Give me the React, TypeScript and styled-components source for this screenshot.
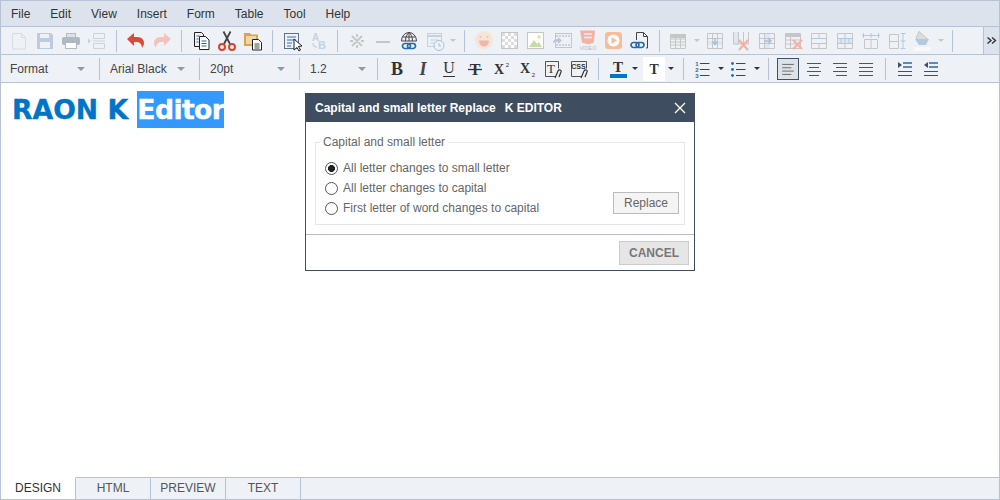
import React, { ReactElement, ReactNode } from "react";
import styled, { createGlobalStyle } from "styled-components";

const LINE = "#b7c3d5";
const BAR = "#eef1f5";
const OFF = "#c6c6c6";
const PALE = "#c3d2e3";
const DARK = "#333";
const BLUE = "#2a6aa8";
const TINT = "#dde8f2";

const GlobalStyle = createGlobalStyle`
  html, body {
    margin: 0;
    padding: 0;
    background: #fff;
    font-family: "Liberation Sans", Arial, sans-serif;
  }
`;

const Ico = ({ children }: { children: ReactNode }): ReactElement => (
  <svg width={24} height={24} viewBox="0 0 24 24" fill="none">
    {children}
  </svg>
);

const chain = (x: number, y: number, c: string): ReactElement => (
  <g transform={`translate(${x} ${y})`} stroke={c} strokeWidth={1.7} fill="none">
    <rect x={0} y={0} width={8} height={5} rx={2.5} />
    <rect x={5} y={0} width={8} height={5} rx={2.5} />
  </g>
);

const ICONS: Record<string, ReactElement> = {
  new: (
    <Ico>
      <path d="M5.5 4.5h9l4 4v11.5h-13zM14.5 4.5v4h4" stroke="#d6dce4" />
    </Ico>
  ),
  save: (
    <Ico>
      <path d="M4 4h14l2 2v14H4z" fill="#bccbdd" />
      <rect x={7} y={5} width={9} height={4} fill={BAR} />
      <rect x={7} y={13} width={10} height={6} fill={BAR} />
    </Ico>
  ),
  print: (
    <Ico>
      <rect x={7.500} y={4.500} width={9} height={4} fill="#dde1e6" stroke="#b4bcc5" />
      <rect x={3} y={8} width={18} height={8} rx={2} fill="#b0b8c1" />
      <rect x={6.500} y={13.500} width={11} height={6} fill="#fff" stroke="#b0b8c1" />
    </Ico>
  ),
  pagebreak: (
    <Ico>
      <path d="M8.500 4.500h11v5h-11zM8.500 14.500h11v5h-11zM8 12h12" stroke="#ccd2da" />
      <path d="M3 9.500l3 2.500-3 2.500z" fill={PALE} />
    </Ico>
  ),
  undo: (
    <Ico>
      <path d="M3 10l7-6v4h3c5 0 7 3 7 6 0 2-1 3.500-2 5 0-3-2-6-5-6h-3v4z" fill="#dc4a35" />
    </Ico>
  ),
  redo: (
    <Ico>
      <path d="M21 10l-7-6v4h-3c-5 0-7 3-7 6 0 2 1 3.500 2 5 0-3 2-6 5-6h3v4z" fill="#f2c3bb" />
    </Ico>
  ),
  copy: (
    <Ico>
      <path d="M5.500 3.500h7l2 2v12h-9z" fill={BAR} stroke="#222" />
      <path d="M10.500 7.500h6l3.500 3.500v9.500h-9.500z" fill="#fff" stroke="#222" />
      <path d="M12.500 12h5M12.500 14.500h5M12.500 17h5M7.500 7h3M7.500 10h2M7.500 13h2" stroke="#2a6aa8" />
    </Ico>
  ),
  cut: (
    <Ico>
      <path d="M9 15L15.500 2.500M15 15L8.500 2.500" stroke="#444" strokeWidth={1.800} />
      <circle cx={7} cy={18} r={3} stroke="#d9432f" strokeWidth={2} />
      <circle cx={17} cy={18} r={3} stroke="#d9432f" strokeWidth={2} />
    </Ico>
  ),
  paste: (
    <Ico>
      <path d="M3 4h6l1 1.500h7V17H3z" fill="#d9a44c" />
      <rect x={5} y={7} width={10} height={8} fill="#efd6a8" />
      <path d="M11.500 10.500h6l3 3v7.500h-9z" fill="#fff" stroke="#222" />
      <path d="M13.500 15h5M13.500 17h5M13.500 19h5" stroke="#444" />
    </Ico>
  ),
  selectall: (
    <Ico>
      <rect x={4.500} y={4.500} width={14} height={15} fill={BAR} stroke="#5f7188" />
      <path d="M7 8h9M7 11h9M7 14h5M7 17h4" stroke="#6f9bd1" strokeWidth={1.300} />
      <path d="M14 10v11l3-2.500 2 3.500 1.500-1-2-3.500 3.500-.5z" fill="#fff" stroke="#222" />
    </Ico>
  ),
  replace: (
    <Ico>
      <text x={6} y={12} fontFamily="Liberation Sans" fontWeight={700} fontSize={10} fill={PALE}>A</text>
      <text x={12} y={20} fontFamily="Liberation Sans" fontWeight={700} fontSize={11} fill={PALE}>B</text>
      <path d="M7 14c0 3 1 4 4 4" stroke={PALE} strokeWidth={1.300} />
    </Ico>
  ),
  special: (
    <Ico>
      <path d="M7 7l10 10M17 7L7 17M12 5v3M12 16v3M5 12h3M16 12h3" stroke={OFF} strokeWidth={1.800} />
    </Ico>
  ),
  hr: (
    <Ico>
      <path d="M5 13h14" stroke={OFF} strokeWidth={2} />
    </Ico>
  ),
  globelink: (
    <Ico>
      <path d="M4.500 12a7.500 8.500 0 0 1 15 0zM12 3.500V12M8.500 12c0-4 1.500-7 3.500-8.500 2 1.500 3.500 4.500 3.500 8.500M5.500 8h13" stroke="#444" strokeWidth={1} />
      {chain(5.500, 14.500, BLUE)}
    </Ico>
  ),
  date: (
    <Ico>
      <rect x={4.500} y={4.500} width={14} height={13} fill={BAR} stroke={PALE} />
      <path d="M4 6h15v2H4z" fill={PALE} />
      <path d="M7 11h9M7 14h5" stroke={PALE} />
      <circle cx={16} cy={16.500} r={5} fill={BAR} stroke="#a9c0da" />
      <path d="M16 14v3h2" stroke="#a9c0da" />
    </Ico>
  ),
  emoji: (
    <Ico>
      <circle cx={12} cy={11} r={9} fill="#f5e5d9" />
      <path d="M7 11.500h10c0 3.500-2 6-5 6s-5-2.500-5-6z" fill="#f1b6a7" />
      <circle cx={8.500} cy={8} r={1} fill="#e3c6b6" />
      <circle cx={15.500} cy={8} r={1} fill="#e3c6b6" />
    </Ico>
  ),
  imagebg: (
    <Ico>
      <rect x={3.500} y={3.500} width={16} height={16} fill="#fff" stroke={OFF} />
      {[0, 1, 2, 3, 4].flatMap((r) =>
        [0, 1, 2, 3, 4]
          .filter((c) => (r + c) % 2 === 0)
          .map((c) => (
            <rect key={`${r}-${c}`} x={4 + c * 3} y={4 + r * 3} width={3} height={3} fill="#dcdcdc" />
          )),
      )}
    </Ico>
  ),
  image: (
    <Ico>
      <rect x={3.500} y={3.500} width={16} height={16} fill="#fff" stroke={OFF} />
      <path d="M5 18l5-7 3 4 2-2 3 5z" fill="#c3dcaa" />
      <circle cx={15} cy={8} r={1.800} fill="#f1dba2" />
    </Ico>
  ),
  movie: (
    <Ico>
      <rect x={5.500} y={4.500} width={16} height={14} fill={BAR} stroke={OFF} />
      <path d="M6 7h15M6 16h15" stroke={OFF} strokeWidth={1.500} strokeDasharray="2 1" />
      <path d="M3 14c0-3 2-4 5-4V8l4 3.500-4 3.500v-2c-2 0-4 0-5 1z" fill="#b4c9e0" />
    </Ico>
  ),
  video: (
    <Ico>
      <path d="M4 1.500h15l-1 12-5.500 2-6.500-2z" fill="#f2b3a5" />
      <path d="M8 5h8M8 8.500h8" stroke={BAR} strokeWidth={1.500} />
      <text x={12} y={21} textAnchor="middle" fontFamily="Liberation Sans" fontSize={5.500} fill="#bdbdbd">VIDEO</text>
    </Ico>
  ),
  play: (
    <Ico>
      <rect x={3} y={3} width={17} height={17} rx={3} fill="#f7bd9a" />
      <circle cx={11.500} cy={11.500} r={6} fill="#fff" />
      <path d="M9.500 8l5.500 3.500-5.500 3.500z" fill="#f7bd9a" />
    </Ico>
  ),
  filelink: (
    <Ico>
      <path d="M8.500 11V3.500h7l4 4V19H18M15.500 3.500v4h4" stroke="#444" />
      {chain(3, 13.500, BLUE)}
    </Ico>
  ),
  table: (
    <Ico>
      <path d="M3 5h16v4H3z" fill={OFF} />
      <path d="M3.500 5.500h15v14h-15zM3.500 10h15M3.500 13h15M3.500 16h15M8.500 9v10M13.500 9v10" stroke={OFF} />
    </Ico>
  ),
  rowadd: (
    <Ico>
      <path d="M5 12h14v4H5z" fill={TINT} />
      <path d="M4.500 4.500h15v15h-15zM4.500 9.500h15M9.500 4.500v15M14.500 4.500v15" stroke={OFF} />
      <path d="M12 9v6M9.500 12.500l2.500 3 2.500-3" stroke="#a9c0da" strokeWidth={1.500} />
    </Ico>
  ),
  coldel: (
    <Ico>
      <path d="M5 3h5v13H5z" fill={TINT} />
      <path d="M4.500 3v12h15V3M9.500 3v12M14.500 3v12" stroke={OFF} />
      <path d="M10 11l9 10M19 11l-9 10" stroke="#f0b3a8" strokeWidth={2.200} />
    </Ico>
  ),
  coladd: (
    <Ico>
      <path d="M10 5h5v14h-5z" fill={TINT} />
      <path d="M4.500 4.500h15v15h-15zM9.500 4.500v15M4.500 9.500h15M4.500 14.500h15" stroke={OFF} />
      <path d="M9 12h7M13 9l3 3-3 3" stroke="#a9c0da" strokeWidth={1.500} />
    </Ico>
  ),
  rowdel: (
    <Ico>
      <path d="M4 4h15v4H4z" fill={OFF} />
      <path d="M4.500 4.500h15v15h-15zM4.500 11h15M4.500 15h15M9.500 4.500v15" stroke={OFF} />
      <path d="M12 11l9 9M21 11l-9 9" stroke="#f0b3a8" strokeWidth={2.200} />
    </Ico>
  ),
  merge: (
    <Ico>
      <path d="M4.500 4.500h15v15h-15zM12 4.500v5M12 14.500v5" stroke={OFF} />
      <path d="M4.500 9.500h15M4.500 14.500h15" stroke="#b4c9e0" />
    </Ico>
  ),
  split: (
    <Ico>
      <path d="M4.500 4.500h15v15h-15zM12 4.500v15" stroke={OFF} />
      <path d="M5 10h14v4H5z" fill={TINT} />
      <path d="M8 10v4M12 10v4M16 10v4M4.500 9.500h15M4.500 14.500h15" stroke="#b4c9e0" />
    </Ico>
  ),
  colwidth: (
    <Ico>
      <path d="M5.500 10.500h13v9h-13zM12 10.500v9" stroke={OFF} />
      <path d="M3 6.500h18M4.500 4v5M12 4v5M19.500 4v5" stroke="#b4c9e0" />
    </Ico>
  ),
  rowheight: (
    <Ico>
      <path d="M4.500 5.500h9v14h-9zM4.500 12.500h9" stroke={OFF} />
      <path d="M18 4v16M15.500 4.500h5M15.500 19.500h5M15.500 12h5" stroke="#b4c9e0" />
    </Ico>
  ),
  fill: (
    <Ico>
      <path d="M8 2.500l9 8-5.500 5-6.500-6.500z" fill="#dcdcdc" stroke={OFF} />
      <path d="M4 10h14l-3 6H8z" fill="#b4c9e0" />
      <rect x={3} y={18} width={17} height={4} fill="#f8f8f8" />
    </Ico>
  ),
  bold: (
    <Ico>
      <text x={12} y={18} textAnchor="middle" fontFamily="Liberation Serif" fontWeight={700} fontSize={18} fill={DARK}>B</text>
    </Ico>
  ),
  italic: (
    <Ico>
      <text x={12} y={18} textAnchor="middle" fontFamily="Liberation Serif" fontWeight={700} fontStyle="italic" fontSize={18} fill="#444">I</text>
    </Ico>
  ),
  underline: (
    <Ico>
      <text x={12} y={16} textAnchor="middle" fontFamily="Liberation Serif" fontSize={16} fill={DARK}>U</text>
      <path d="M6 19.500h12" stroke={DARK} />
    </Ico>
  ),
  strike: (
    <Ico>
      <text x={12} y={18} textAnchor="middle" fontFamily="Liberation Serif" fontWeight={700} fontSize={16} fill={DARK}>T</text>
      <path d="M5 12.500h14" stroke={DARK} strokeWidth={1.300} />
    </Ico>
  ),
  sup: (
    <Ico>
      <text x={10} y={17} textAnchor="middle" fontFamily="Liberation Serif" fontWeight={700} fontSize={14} fill={DARK}>X</text>
      <text x={18.500} y={10} textAnchor="middle" fontFamily="Liberation Sans" fontSize={6} fill={DARK}>2</text>
    </Ico>
  ),
  sub: (
    <Ico>
      <text x={10} y={16} textAnchor="middle" fontFamily="Liberation Serif" fontWeight={700} fontSize={14} fill={DARK}>X</text>
      <text x={18.500} y={20} textAnchor="middle" fontFamily="Liberation Sans" fontSize={6} fill={DARK}>2</text>
    </Ico>
  ),
  clearstyle: (
    <Ico>
      <path d="M15 19.500H4.500v-15h13v7" stroke="#555" />
      <text x={10} y={16} textAnchor="middle" fontFamily="Liberation Serif" fontSize={13} fill={DARK}>T</text>
      <path d="M14 21l3-7c1-2 4-1 3 1l-2 5" stroke={DARK} strokeWidth={1.200} />
    </Ico>
  ),
  css: (
    <Ico>
      <path d="M15 19.500H4.500v-15h15v7" stroke="#555" />
      <text x={11.500} y={12} textAnchor="middle" fontFamily="Liberation Sans" fontWeight={700} fontSize={7} fill={DARK}>CSS</text>
      <path d="M14 21l3-7c1-2 4-1 3 1l-2 5" stroke={DARK} strokeWidth={1.200} />
    </Ico>
  ),
  color: (
    <Ico>
      <text x={12} y={15} textAnchor="middle" fontFamily="Liberation Serif" fontWeight={700} fontSize={15} fill={DARK}>T</text>
      <rect x={4} y={17} width={17} height={4} fill="#0075c8" />
    </Ico>
  ),
  background: (
    <Ico>
      <text x={12} y={17} textAnchor="middle" fontFamily="Liberation Serif" fontWeight={700} fontSize={15} fill={DARK}>T</text>
    </Ico>
  ),
  numbered: (
    <Ico>
      <path d="M9 6.500h9.500M9 12.500h9.500M9 18.500h9.500" stroke="#444" />
      <text x={6} y={9} textAnchor="middle" fontFamily="Liberation Sans" fontWeight={700} fontSize={6} fill={BLUE}>1</text>
      <text x={6} y={15} textAnchor="middle" fontFamily="Liberation Sans" fontWeight={700} fontSize={6} fill={BLUE}>2</text>
      <text x={6} y={21} textAnchor="middle" fontFamily="Liberation Sans" fontWeight={700} fontSize={6} fill={BLUE}>3</text>
    </Ico>
  ),
  bullets: (
    <Ico>
      <path d="M9 6.500h9.500M9 12.500h9.500M9 18.500h9.500" stroke="#444" />
      <circle cx={5.500} cy={6.500} r={1.400} fill={BLUE} />
      <circle cx={5.500} cy={12.500} r={1.400} fill={BLUE} />
      <circle cx={5.500} cy={18.500} r={1.400} fill={BLUE} />
    </Ico>
  ),
  alignLeft: (
    <Ico>
      <path d="M5 6.500h14M5 10.500h11M5 14.500h14M5 18.500h11" stroke="#555" />
    </Ico>
  ),
  alignCenter: (
    <Ico>
      <path d="M5 6.500h14M7 10.500h10M5 14.500h14M7 18.500h10" stroke="#555" />
    </Ico>
  ),
  alignRight: (
    <Ico>
      <path d="M5 6.500h14M8 10.500h11M5 14.500h14M8 18.500h11" stroke="#555" />
    </Ico>
  ),
  justify: (
    <Ico>
      <path d="M5 6.500h14M5 10.500h14M5 14.500h14M5 18.500h14" stroke="#555" />
    </Ico>
  ),
  indent: (
    <Ico>
      <path d="M10 6h9M10 10h9" stroke={BLUE} strokeWidth={1.600} />
      <path d="M5 14.500h14M5 18.500h14" stroke="#3f5068" strokeWidth={1.200} />
      <path d="M5 5l4 3-4 3z" fill="#3f5068" />
    </Ico>
  ),
  outdent: (
    <Ico>
      <path d="M10 6h9M10 10h9" stroke={BLUE} strokeWidth={1.600} />
      <path d="M5 14.500h14M5 18.500h14" stroke="#3f5068" strokeWidth={1.200} />
      <path d="M9 5L5 8l4 3z" fill="#3f5068" />
    </Ico>
  ),
};

const MENU = ["File", "Edit", "View", "Insert", "Form", "Table", "Tool", "Help"];
const TABS = ["DESIGN", "HTML", "PREVIEW", "TEXT"];
const OPTIONS = [
  "All letter changes to small letter",
  "All letter changes to capital",
  "First letter of word changes to capital",
];

const Tool = ({ name }: { name: string }): ReactElement => (
  <ToolSlot>{ICONS[name]}</ToolSlot>
);

const ToolGroup = ({ names }: { names: string[] }): ReactElement => (
  <>
    {names.map((n) => (
      <Tool key={n} name={n} />
    ))}
  </>
);

const Combo = ({ label, wide }: { label: string; wide: number }): ReactElement => (
  <Select $wide={wide}>
    {label}
    <ComboCaret $color="#8a9ab3" />
  </Select>
);

export default function App(): ReactElement {
  return (
    <Root>
      <GlobalStyle />
      <MenuBar>
        {MENU.map((m) => (
          <MenuItem key={m}>{m}</MenuItem>
        ))}
      </MenuBar>

      <ToolBar>
        <ToolGroup names={["new", "save", "print", "pagebreak"]} />
        <Sep />
        <ToolGroup names={["undo", "redo"]} />
        <Sep />
        <ToolGroup names={["copy", "cut", "paste"]} />
        <Sep />
        <ToolGroup names={["selectall", "replace"]} />
        <Sep />
        <ToolGroup names={["special", "hr", "globelink"]} />
        <Tool name="date" />
        <DropSlot>
          <Caret $color={OFF} />
        </DropSlot>
        <Sep />
        <ToolGroup names={["emoji", "imagebg", "image", "movie", "video", "play", "filelink"]} />
        <Sep />
        <Tool name="table" />
        <DropSlot>
          <Caret $color={OFF} />
        </DropSlot>
        <ToolGroup names={["rowadd", "coldel", "coladd", "rowdel", "merge", "split", "colwidth", "rowheight", "fill"]} />
        <DropSlot>
          <Caret $color={OFF} />
        </DropSlot>
        <Sep />
        <MoreButton>
          <svg width={10} height={7} viewBox="0 0 10 7" fill="none">
            <path d="M.5.5l3.500 3-3.500 3M5 .5l3.500 3-3.500 3" stroke="#333" strokeWidth={1.400} />
          </svg>
        </MoreButton>
      </ToolBar>

      <ToolBar>
        <Combo label="Format" wide={78} />
        <Sep $left={11} $right={10} />
        <Combo label="Arial Black" wide={78} />
        <Sep $left={11} $right={10} />
        <Combo label="20pt" wide={78} />
        <Sep $left={11} $right={10} />
        <Combo label="1.2" wide={59} />
        <Sep $left={8} />
        <ToolGroup names={["bold", "italic", "underline", "strike", "sup", "sub", "clearstyle", "css"]} />
        <Sep />
        <Tool name="color" />
        <DropSlot $wide={8}>
          <Caret $color={DARK} />
        </DropSlot>
        <WhiteSlot>{ICONS.background}</WhiteSlot>
        <DropSlot $wide={12}>
          <Caret $color={DARK} />
        </DropSlot>
        <Sep />
        <Tool name="numbered" />
        <DropSlot>
          <Caret $color={DARK} />
        </DropSlot>
        <Tool name="bullets" />
        <DropSlot>
          <Caret $color={DARK} />
        </DropSlot>
        <Sep />
        <ActiveSlot>{ICONS.alignLeft}</ActiveSlot>
        <ToolGroup names={["alignCenter", "alignRight", "justify"]} />
        <Sep />
        <ToolGroup names={["indent", "outdent"]} />
      </ToolBar>

      <Editor>
        RAON K <Selected>Editor</Selected>
      </Editor>

      <TabBar>
        {TABS.map((t, i) => (
          <Tab key={t} $active={i === 0}>
            {t}
          </Tab>
        ))}
        <TabRest />
      </TabBar>

      <Dialog>
        <DialogHeader>
          <DialogTitle>Capital and small letter Replace</DialogTitle>
          <DialogTitle>K EDITOR</DialogTitle>
          <CloseIcon width={12} height={12} viewBox="0 0 12 12">
            <path d="M1 1l10 10M11 1L1 11" stroke="#fff" strokeWidth={1.300} />
          </CloseIcon>
        </DialogHeader>
        <DialogBody>
          <Group>
            <GroupLegend>Capital and small letter</GroupLegend>
            <GroupInner>
              <div>
                {OPTIONS.map((o, i) => (
                  <OptionRow key={o}>
                    <Radio type="radio" name="case" defaultChecked={i === 0} />
                    {o}
                  </OptionRow>
                ))}
              </div>
              <ReplaceButton>Replace</ReplaceButton>
            </GroupInner>
          </Group>
        </DialogBody>
        <DialogFooter>
          <CancelButton>CANCEL</CancelButton>
        </DialogFooter>
      </Dialog>
    </Root>
  );
}

const Root = styled.div`
  position: relative;
  box-sizing: border-box;
  width: 1000px;
  height: 500px;
  border: 1px solid ${LINE};
  display: flex;
  flex-direction: column;
  overflow: hidden;
  font-size: 12px;
  color: ${DARK};
`;

const MenuBar = styled.div`
  display: flex;
  gap: 20px;
  align-items: center;
  height: 25px;
  padding-left: 10px;
  background: #dce3ec;
  border-bottom: 1px solid ${LINE};
`;

const MenuItem = styled.span`
  color: #333;
`;

const ToolBar = styled.div`
  display: flex;
  align-items: center;
  flex: none;
  box-sizing: border-box;
  height: 28px;
  padding-left: 5px;
  background: ${BAR};
  border-bottom: 1px solid ${LINE};

  & + & {
    padding-left: 9px;
  }
`;

const ToolSlot = styled.span`
  flex: none;
  display: flex;
  align-items: center;
  justify-content: center;
  width: 26px;
  height: 24px;
`;

const WhiteSlot = styled(ToolSlot)`
  width: 22px;
  margin-left: 4px;
  background: #fff;
`;

const ActiveSlot = styled(ToolSlot)`
  box-sizing: border-box;
  width: 22px;
  height: 22px;
  margin: 0 2px;
  background: #dde2e8;
  border: 1px solid #3f5068;
`;

const DropSlot = styled.span<{ $wide?: number }>`
  flex: none;
  display: flex;
  align-items: center;
  justify-content: center;
  width: ${(p) => p.$wide ?? 10}px;
`;

const Caret = styled.span<{ $color: string }>`
  flex: none;
  width: 0;
  height: 0;
  border-left: 3px solid transparent;
  border-right: 3px solid transparent;
  border-top: 3px solid ${(p) => p.$color};
`;

const ComboCaret = styled(Caret)`
  border-left-width: 4px;
  border-right-width: 4px;
  border-top-width: 4px;
`;

const Sep = styled.span<{ $left?: number; $right?: number }>`
  flex: none;
  width: 1px;
  height: 22px;
  margin-left: ${(p) => p.$left ?? 6}px;
  margin-right: ${(p) => p.$right ?? 6}px;
  background: ${LINE};
`;

const MoreButton = styled.span`
  align-self: stretch;
  margin-left: auto;
  width: 15px;
  display: flex;
  align-items: center;
  justify-content: center;
  background: #dce3ec;
  border-left: 1px solid ${LINE};
`;

const Select = styled.span<{ $wide: number }>`
  flex: none;
  display: flex;
  align-items: center;
  justify-content: space-between;
  box-sizing: border-box;
  width: ${(p) => p.$wide}px;
  padding-right: 3px;
  color: #444;
`;

const Editor = styled.div`
  flex: 1;
  padding: 8px 0 0 11px;
  font-family: "DejaVu Sans", sans-serif;
  font-weight: 700;
  font-size: 26.67px;
  line-height: 37px;
  color: #0075c8;
  -webkit-text-stroke: 0.4px currentColor;
`;

const Selected = styled.span`
  display: inline-block;
  background: #3399ff;
  color: #fff;
  letter-spacing: -0.6px;
`;

const TabBar = styled.div`
  display: flex;
  flex: none;
  height: 22px;
  background: ${BAR};
`;

const Tab = styled.div<{ $active: boolean }>`
  box-sizing: border-box;
  width: 75px;
  padding-bottom: 1px;
  display: flex;
  align-items: center;
  justify-content: center;
  border-right: 1px solid ${LINE};
  border-top: 1px solid ${(p) => (p.$active ? "#fff" : LINE)};
  background: ${(p) => (p.$active ? "#fff" : BAR)};
  color: ${(p) => (p.$active ? "#333" : "#555")};
`;

const TabRest = styled.div`
  flex: 1;
  border-top: 1px solid ${LINE};
`;

const Dialog = styled.div`
  position: absolute;
  left: 304px;
  top: 92px;
  box-sizing: border-box;
  width: 390px;
  height: 178px;
  display: flex;
  flex-direction: column;
  background: #fff;
  border: 1px solid #3f4d60;
`;

const DialogHeader = styled.div`
  display: flex;
  align-items: center;
  gap: 9px;
  flex: none;
  height: 28px;
  padding: 0 9px;
  background: #3f4d60;
`;

const DialogTitle = styled.span`
  font-weight: 700;
  color: #fff;
`;

const CloseIcon = styled.svg`
  margin-left: auto;
  margin-right: -1px;
`;

const DialogBody = styled.div`
  flex: none;
  height: 113px;
  box-sizing: border-box;
  padding: 13px 9px 0;
  border-bottom: 1px solid #b4bccb;
`;

const Group = styled.fieldset`
  margin: 0;
  padding: 0;
  min-width: 0;
  box-sizing: border-box;
  height: 90px;
  border: 1px solid #e6e6e6;
`;

const GroupLegend = styled.legend`
  margin-left: 4px;
  padding: 0 3px;
  color: #666;
  line-height: 14px;
`;

const GroupInner = styled.div`
  display: flex;
  justify-content: space-between;
  align-items: flex-end;
  padding: 9px 5px 5px 9px;
`;

const OptionRow = styled.label`
  display: flex;
  align-items: center;
  gap: 5px;
  height: 20px;
  color: #666;
`;

const Radio = styled.input`
  appearance: none;
  flex: none;
  width: 13px;
  height: 13px;
  margin: 0;
  border: 1px solid #555;
  border-radius: 50%;
  background: #fff;

  &:checked {
    background: radial-gradient(circle, #222 0 3.2px, #fff 3.8px);
  }
`;

const ReplaceButton = styled.button`
  box-sizing: border-box;
  width: 66px;
  height: 22px;
  margin-bottom: 4px;
  padding: 0;
  font: inherit;
  color: #666;
  background: #f4f4f4;
  border: 1px solid #bbb;
`;

const DialogFooter = styled.div`
  flex: 1;
  display: flex;
  justify-content: flex-end;
  padding: 6px 5px 0 0;
`;

const CancelButton = styled.button`
  box-sizing: border-box;
  width: 70px;
  height: 24px;
  padding: 0;
  font: inherit;
  font-weight: 700;
  color: #777;
  background: #e6e6e6;
  border: 1px solid #ccc;
`;
